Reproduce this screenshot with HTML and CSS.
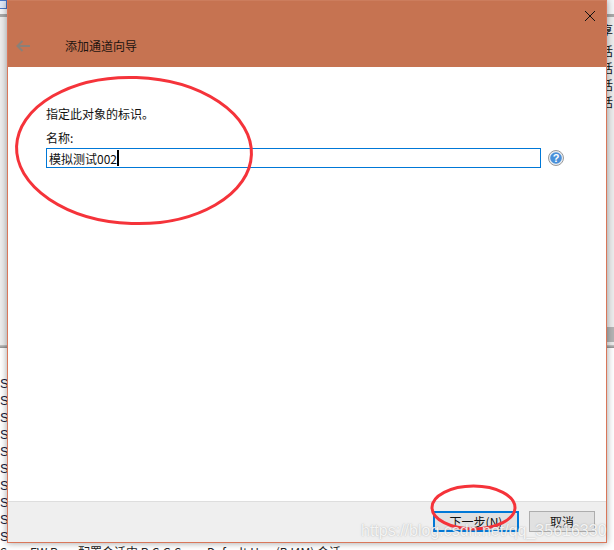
FILE: index.html
```html
<!DOCTYPE html>
<html lang="zh-CN">
<head>
<meta charset="utf-8">
<title>添加通道向导</title>
<link rel="stylesheet" href="styles.css">
</head>
<body>
<div class="backdrop">
  <div class="top-strip">
    <div class="tab-row"><span class="tab-icon"></span></div>
    <div class="grey-bar"></div>
  </div>
  <div class="mid-strip">
    <div class="right-glyphs"><span class="first">享</span><span>话</span><span>话</span><span>话</span><span>话</span></div>
    <div class="scroll-block"></div>
  </div>
  <div class="log-bar"></div>
  <div class="log">
    <div>Se</div><div>Se</div><div>Se</div><div>Se</div><div>Se</div><div>Se</div><div>Se</div><div>Se</div><div>Se</div><div>Se</div>
  </div>
  <div class="status-line"><span class="s1">S</span><span class="s2">FW Ros</span><span class="s3">配置会话中 R.C.G.S</span><span class="s4">Default User(BJ4M) 会话</span></div>
</div>

<main class="dialog">
  <header class="dialog-head">
    <button class="close" aria-label="关闭">
      <svg width="12" height="12" viewBox="0 0 12 12"><path d="M1 1l10 10M11 1L1 11" stroke="#111" stroke-width="1" fill="none"/></svg>
    </button>
    <div class="title-row">
      <svg class="back" width="14" height="12" viewBox="0 0 14 12"><path d="M6.500 1L1.500 6l5 5M2 6h12" stroke="#8a8078" stroke-width="2" fill="none"/></svg>
      <h1 class="title">添加通道向导</h1>
    </div>
  </header>
  <section class="dialog-body">
    <p class="intro">指定此对象的标识。</p>
    <label class="name-label" for="name">名称:</label>
    <div class="name-row">
      <div class="name-input" id="name"><span>模拟测试002</span><i class="caret"></i></div>
      <svg class="help" width="16" height="16" viewBox="0 0 16 16">
        <circle cx="8" cy="8" r="7.500" fill="#e9edf2" stroke="#9a9a9a" stroke-width="1"/>
        <circle cx="8" cy="8" r="5.800" fill="#4a90d9"/>
        <text x="8" y="12" class="help-q" text-anchor="middle">?</text>
      </svg>
    </div>
  </section>
  <footer class="dialog-foot">
    <button class="btn btn-primary">下一步(N)</button>
    <button class="btn">取消</button>
  </footer>
</main>

<svg class="marks" width="614" height="550" viewBox="0 0 614 550">
  <ellipse cx="134" cy="150.500" rx="117.500" ry="73" transform="rotate(2 134 150.500)" fill="none" stroke="#f5333a" stroke-width="3"/>
  <ellipse cx="473.500" cy="507.500" rx="41.500" ry="21.500" fill="none" stroke="#f5333a" stroke-width="3"/>
</svg>
<div class="watermark">https://blog.csdn.net/qq_35616330</div>
</body>
</html>
```

FILE: styles.css
```css
* { box-sizing: border-box; }
html, body { margin: 0; padding: 0; }
body {
  position: relative;
  width: 614px;
  height: 550px;
  overflow: hidden;
  background: #fff;
  font-family: "Noto Sans CJK SC", "Liberation Sans", sans-serif;
  color: #111;
}
.backdrop {
  height: 550px;
  display: flex;
  flex-direction: column;
  overflow: hidden;
  background: #fff;
}
.top-strip { height: 17px; flex: none; }
.tab-row { height: 14px; background: #f4f5f7; }
.tab-icon {
  display: block;
  width: 7px;
  height: 9px;
  border: 1px solid #4a78c8;
  border-left: 0;
  background: #dfe8f8;
}
.grey-bar { height: 3px; background: #a8a8a8; }
.mid-strip {
  height: 328px;
  flex: none;
  display: flex;
  flex-direction: column;
  align-items: flex-end;
  background: #ededed;
}
.right-glyphs {
  display: flex;
  flex-direction: column;
  flex: 1;
  width: 8px;
  padding-top: 4px;
  overflow: hidden;
  font-size: 12px;
  line-height: 17px;
  color: #111;
}
.right-glyphs span { display: block; width: 12px; margin-left: -5px; }
.right-glyphs .first { margin-bottom: 4px; }
.scroll-block { height: 15px; width: 7px; background: #b4b4b4; margin-bottom: 3px; }
.log-bar { height: 3px; flex: none; background: linear-gradient(#c9c9c9, #8f8f8f); }
.log {
  height: 196px;
  flex: none;
  padding-top: 27px;
  font-family: "Liberation Sans", sans-serif;
  font-size: 13px;
  line-height: 17px;
  color: #1a1a3a;
  overflow: hidden;
  white-space: nowrap;
}
.status-line {
  flex: none;
  height: 6px;
  padding-top: 2px;
  overflow: hidden;
  font-size: 12px;
  line-height: 12px;
  white-space: nowrap;
  display: flex;
  color: #222;
}
.s1 { width: 30px; }
.s2 { width: 48px; }
.s3 { width: 129px; }
.s4 { width: 200px; }
.dialog {
  position: absolute;
  left: 7px;
  top: 0;
  width: 600px;
  height: 543px;
  display: flex;
  flex-direction: column;
  background: #fff;
  border: 1px solid #d9775a;
  border-top: 0;
  box-shadow: 0 0 7px rgba(0, 0, 0, .38);
}
.dialog-head {
  height: 67px;
  flex: none;
  background: #c67351;
  border-top: 1px solid #cc7d5d;
  display: flex;
  flex-direction: column;
  position: relative;
}
.close {
  position: absolute;
  right: 10px;
  top: 9px;
  width: 12px;
  height: 12px;
  padding: 0;
  border: 0;
  background: none;
  display: flex;
}
.title-row {
  display: flex;
  align-items: center;
  height: 30px;
  margin-top: 30px;
  padding-left: 8px;
}
.back { flex: none; }
.title {
  margin: 0 0 0 35px;
  font-size: 12px;
  font-weight: 400;
  line-height: 16px;
  color: #1d1410;
}
.dialog-body {
  flex: 1;
  padding: 39px 0 0 38px;
  font-size: 12px;
}
.intro { margin: 0; line-height: 16px; }
.name-label { display: block; margin-top: 8px; line-height: 16px; }
.name-row {
  display: flex;
  align-items: center;
  gap: 7px;
  margin-top: 2px;
}
.name-input {
  width: 495px;
  height: 20px;
  border: 1px solid #0078d7;
  display: flex;
  align-items: center;
  padding-left: 2px;
  font-size: 12px;
  background: #fff;
  outline: .5px solid #0078d7;
  outline-offset: -1px;
}
.caret {
  display: inline-block;
  width: 2px;
  height: 16px;
  background: #000;
}
.help { flex: none; }
.help-q {
  font-family: "Liberation Sans", sans-serif;
  font-size: 11px;
  font-weight: 700;
  fill: #fff;
}
.dialog-foot {
  height: 41px;
  flex: none;
  background: #efefef;
  border-top: 1px solid #dedede;
  display: flex;
  justify-content: flex-end;
  align-items: flex-start;
  gap: 10px;
  padding: 9px 11px 0 0;
}
.btn {
  width: 66px;
  height: 21px;
  padding: 0;
  font-family: inherit;
  font-size: 12px;
  line-height: 17px;
  color: #111;
  background: #e1e1e1;
  border: 1px solid #adadad;
}
.btn-primary {
  width: 86px;
  border: 2px solid #0078d7;
}
.marks {
  position: absolute;
  left: 0;
  top: 0;
  pointer-events: none;
}
.watermark {
  position: absolute;
  left: 361px;
  top: 522px;
  font-family: "Liberation Sans", sans-serif;
  font-size: 16px;
  line-height: 18px;
  white-space: nowrap;
  color: rgba(255, 255, 255, .85);
  text-shadow: 0 0 1.500px rgba(110, 110, 110, .55);
}
```
